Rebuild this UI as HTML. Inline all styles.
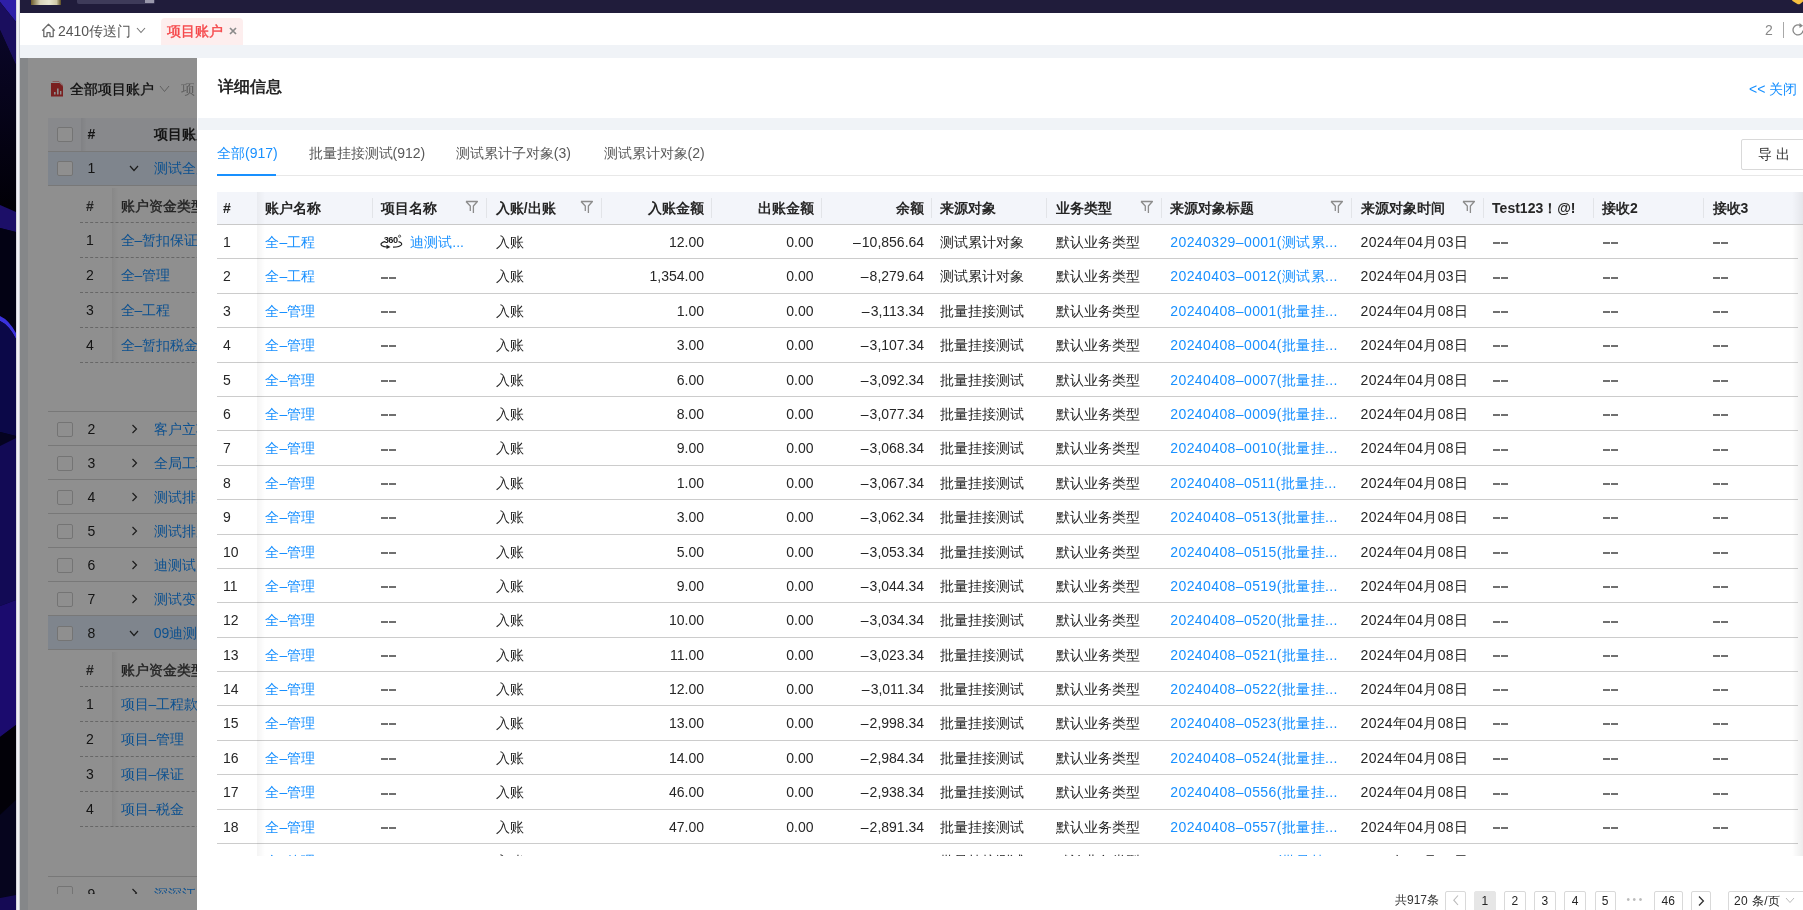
<!DOCTYPE html><html><head><meta charset="utf-8"><title>项目账户</title><style>
*{box-sizing:border-box;margin:0;padding:0}
html,body{width:1803px;height:910px;overflow:hidden;background:#fff}
body>div,body>svg{will-change:transform}
body{position:relative;font-family:"Liberation Sans",sans-serif;font-size:14px;color:#262626}
.a{position:absolute}
.nw{white-space:nowrap}
.link{color:#1890ff}
</style></head><body>
<svg class="a" style="left:0;top:0" width="16" height="910" viewBox="0 0 16 910">
<defs><linearGradient id="gd" x1="0" y1="0" x2="0" y2="1"><stop offset="0" stop-color="#0a0628"/><stop offset="1" stop-color="#010006"/></linearGradient></defs>
<rect width="16" height="910" fill="#040218"/>
<polygon points="0,0 16,0 16,22 0,2" fill="#2e1fa8"/>
<polygon points="0,2 16,22 16,65 0,30" fill="#1a0e5e"/>
<polygon points="0,30 16,65 16,212 0,205" fill="url(#gd)"/>
<polygon points="0,205 16,212 16,232 0,228" fill="#1c0f68"/>
<polygon points="0,228 16,232 16,333 0,316" fill="#030214"/>
<path d="M0 316 Q9 320 16 333 L16 339 Q9 325 0 321 Z" fill="#3b32dc"/>
<path d="M0 321 Q9 325 16 339 L16 436 L0 432 Z" fill="#0b0848"/>
<polygon points="0,432 16,436 16,438 0,446" fill="#050320"/>
<polygon points="0,446 16,438 16,600 0,606" fill="#120a55"/>
<polygon points="0,606 16,600 16,725 0,737" fill="#1b0b6e"/>
<polygon points="0,737 16,725 16,800 0,815" fill="#020108"/>
<polygon points="0,815 16,800 16,895 0,898" fill="#06051e"/>
<polygon points="0,898 16,895 16,910 0,910" fill="#150a55"/>
</svg>
<div class="a" style="left:16px;top:0;width:4px;height:910px;background:linear-gradient(90deg,#c8c9d0,#f4f4f8 40%,#eeeff3 70%,#b8b9be)"></div>
<div class="a" style="left:20px;top:0;width:1783px;height:12.6px;background:#201c3b"></div>
<div class="a" style="left:31px;top:0;width:30px;height:5px;background:linear-gradient(90deg,#6b5a2a,#d8d3b8 30%,#e8e6d0 60%,#cfc9a8 85%,#5a4a20)"></div>
<div class="a" style="left:77px;top:0;width:78px;height:3.7px;background:#3e3b5a;border-radius:0 0 2px 2px"></div>
<div class="a" style="left:145px;top:0;width:9px;height:2.5px;background:#9a98ac"></div>
<svg class="a" style="left:1792px;top:0" width="11" height="5" viewBox="0 0 11 5"><path d="M0 0 H11 V1.5 L8 4 Q6.5 4.8 5 3.8 L0.5 1 Z" fill="#f5c040"/></svg>
<div class="a" style="left:20px;top:12.6px;width:1783px;height:32.4px;background:#fff"></div>
<div class="a" style="left:20px;top:45px;width:1783px;height:13px;background:#f0f3f7"></div>
<svg class="a" style="left:41px;top:23px" width="15" height="15" viewBox="0 0 15 15"><path d="M1.2 7.6 L7.5 1.3 L13.8 7.6 M2.8 6.2 V13.6 H6 V9.6 H9 V13.6 H12.2 V6.2" fill="none" stroke="#6a6a6a" stroke-width="1.3" stroke-linejoin="round"/></svg>
<div class="a nw" style="left:58px;top:21px;line-height:20px;font-size:14px;color:#555">2410传送门</div>
<svg class="a" style="left:136px;top:27px" width="10" height="7" viewBox="0 0 10 7"><path d="M1 1 L5 5.5 L9 1" fill="none" stroke="#777" stroke-width="1.1"/></svg>
<div class="a" style="left:161px;top:18px;width:82px;height:27px;background:#fdeeee;border-radius:4px 4px 0 0"></div>
<div class="a nw" style="left:166.8px;top:20.8px;line-height:20px;font-size:14px;color:#f5484b;-webkit-text-stroke:0.4px #f5484b">项目账户</div>
<svg class="a" style="left:228.6px;top:27px" width="8" height="8" viewBox="0 0 8 8"><path d="M1 1 L7 7 M7 1 L1 7" stroke="#8a8a8a" stroke-width="1.7"/></svg>
<div class="a nw" style="left:1764.7px;top:19.8px;line-height:20px;font-size:14px;color:#888">2</div>
<div class="a" style="left:1783px;top:22px;width:1px;height:16px;background:#a8a8a8"></div>
<svg class="a" style="left:1792px;top:22px" width="14" height="15" viewBox="0 0 14 15"><path d="M11 8.5 A5 5 0 1 1 8.5 3.6" fill="none" stroke="#888" stroke-width="1.3"/><path d="M7.5 1 L11 3.8 L7.5 6 Z" fill="#888"/></svg>
<div class="a" style="left:20px;top:58px;width:177px;height:852px;overflow:hidden;background:#eef0f4">
<div class="a" style="left:8px;top:0;width:200px;height:852px;background:#fff"></div>
<svg class="a" style="left:30px;top:22.5px" width="14" height="16" viewBox="0 0 14 16"><path d="M2.5 0.5 H9 L12.5 4 V13" fill="none" stroke="#f08a8a" stroke-width="0.8"/><path d="M1 2 H9.5 L13 5.5 V15.5 H1 Z" fill="#d93a3a"/><rect x="4" y="11" width="1.6" height="2.5" fill="#fff"/><rect x="7" y="7.5" width="1.6" height="6" fill="#fff"/><rect x="10" y="10" width="1.4" height="3.5" fill="#fff"/></svg>
<div class="a nw" style="left:50px;top:20.5px;line-height:20px;color:#1a1a1a;-webkit-text-stroke:0.3px #1a1a1a">全部项目账户</div>
<svg class="a" style="left:139px;top:26.5px" width="11" height="8" viewBox="0 0 11 8"><path d="M1 1 L5.5 6.5 L10 1" fill="none" stroke="#aaa" stroke-width="1"/></svg>
<div class="a nw" style="left:160.5px;top:21px;line-height:20px;color:#aaa">项目</div>
<div class="a" style="left:28px;top:60px;width:160px;height:34px;background:#f3f5fa;border-bottom:1px solid #d6d6d6"></div>
<div class="a" style="left:61px;top:60px;width:6px;height:33px;background:linear-gradient(90deg,rgba(0,0,0,0.06),rgba(0,0,0,0))"></div>
<div class="a" style="left:37.2px;top:68.8px;width:15.5px;height:15.5px;border:1px solid #cfcfcf;border-radius:2px;background:#fff"></div>
<div class="a nw" style="left:67.5px;top:66px;line-height:20px;font-weight:bold">#</div>
<div class="a nw" style="left:134.3px;top:66px;line-height:20px;font-weight:bold">项目账户名称</div>
<div class="a" style="left:28px;top:94.30000000000001px;width:160px;height:33.8px;background:#e3eefb;border-bottom:1px solid #d6d6d6"></div>
<div class="a" style="left:37.2px;top:102.50000000000003px;width:15.5px;height:15.5px;border:1px solid #cfcfcf;border-radius:2px;background:#fff"></div>
<div class="a nw" style="left:67.5px;top:100.20000000000002px;line-height:20px">1</div>
<svg class="a" style="left:109px;top:107.20000000000002px" width="10" height="7" viewBox="0 0 10 7"><path d="M1 1 L5 5.5 L9 1" fill="none" stroke="#333" stroke-width="1.2"/></svg>
<div class="a nw link" style="left:133.8px;top:100.20000000000002px;line-height:20px">测试全局账户</div>
<div class="a nw" style="left:66px;top:138px;line-height:20px;font-weight:bold;color:#444">#</div>
<div class="a nw" style="left:100.6px;top:138px;line-height:20px;color:#3a3a3a;-webkit-text-stroke:0.35px #3a3a3a">账户资金类型</div>
<div class="a" style="left:92.3px;top:130px;width:6px;height:174.2px;background:linear-gradient(90deg,rgba(0,0,0,0.05),rgba(0,0,0,0))"></div>
<div class="a" style="left:60px;top:164.0px;width:140px;height:0;border-top:1px dashed #b8b8b8"></div>
<div class="a" style="left:60px;top:198.7px;width:140px;height:0;border-top:1px dashed #b8b8b8"></div>
<div class="a" style="left:60px;top:233.5px;width:140px;height:0;border-top:1px dashed #b8b8b8"></div>
<div class="a" style="left:60px;top:268.5px;width:140px;height:0;border-top:1px dashed #b8b8b8"></div>
<div class="a" style="left:60px;top:303.7px;width:140px;height:0;border-top:1px dashed #b8b8b8"></div>
<div class="a nw" style="left:66px;top:171.85px;line-height:20px">1</div>
<div class="a nw link" style="left:100.6px;top:171.85px;line-height:20px">全–暂扣保证金</div>
<div class="a nw" style="left:66px;top:206.60000000000002px;line-height:20px">2</div>
<div class="a nw link" style="left:100.6px;top:206.60000000000002px;line-height:20px">全–管理</div>
<div class="a nw" style="left:66px;top:241.5px;line-height:20px">3</div>
<div class="a nw link" style="left:100.6px;top:241.5px;line-height:20px">全–工程</div>
<div class="a nw" style="left:66px;top:276.6px;line-height:20px">4</div>
<div class="a nw link" style="left:100.6px;top:276.6px;line-height:20px">全–暂扣税金</div>
<div class="a" style="left:28px;top:353.4px;width:160px;height:1px;background:#d6d6d6"></div>
<div class="a" style="left:28px;top:354.4px;width:160px;height:33.700000000000045px;background:#fff;border-bottom:1px solid #d6d6d6"></div>
<div class="a" style="left:37.2px;top:363.55px;width:15.5px;height:15.5px;border:1px solid #cfcfcf;border-radius:2px;background:#fff"></div>
<div class="a nw" style="left:67.5px;top:361.25px;line-height:20px">2</div>
<svg class="a" style="left:111px;top:366.25px" width="7" height="10" viewBox="0 0 7 10"><path d="M1.5 1 L5.5 5 L1.5 9" fill="none" stroke="#333" stroke-width="1.2"/></svg>
<div class="a nw link" style="left:133.8px;top:361.25px;line-height:20px">客户立项账户</div>
<div class="a" style="left:28px;top:388.1px;width:160px;height:34.299999999999955px;background:#fff;border-bottom:1px solid #d6d6d6"></div>
<div class="a" style="left:37.2px;top:397.55px;width:15.5px;height:15.5px;border:1px solid #cfcfcf;border-radius:2px;background:#fff"></div>
<div class="a nw" style="left:67.5px;top:395.25px;line-height:20px">3</div>
<svg class="a" style="left:111px;top:400.25px" width="7" height="10" viewBox="0 0 7 10"><path d="M1.5 1 L5.5 5 L1.5 9" fill="none" stroke="#333" stroke-width="1.2"/></svg>
<div class="a nw link" style="left:133.8px;top:395.25px;line-height:20px">全局工程账户</div>
<div class="a" style="left:28px;top:422.4px;width:160px;height:34.0px;background:#fff;border-bottom:1px solid #d6d6d6"></div>
<div class="a" style="left:37.2px;top:431.7px;width:15.5px;height:15.5px;border:1px solid #cfcfcf;border-radius:2px;background:#fff"></div>
<div class="a nw" style="left:67.5px;top:429.4px;line-height:20px">4</div>
<svg class="a" style="left:111px;top:434.4px" width="7" height="10" viewBox="0 0 7 10"><path d="M1.5 1 L5.5 5 L1.5 9" fill="none" stroke="#333" stroke-width="1.2"/></svg>
<div class="a nw link" style="left:133.8px;top:429.4px;line-height:20px">测试排序账户</div>
<div class="a" style="left:28px;top:456.4px;width:160px;height:34.0px;background:#fff;border-bottom:1px solid #d6d6d6"></div>
<div class="a" style="left:37.2px;top:465.69999999999993px;width:15.5px;height:15.5px;border:1px solid #cfcfcf;border-radius:2px;background:#fff"></div>
<div class="a nw" style="left:67.5px;top:463.4px;line-height:20px">5</div>
<svg class="a" style="left:111px;top:468.4px" width="7" height="10" viewBox="0 0 7 10"><path d="M1.5 1 L5.5 5 L1.5 9" fill="none" stroke="#333" stroke-width="1.2"/></svg>
<div class="a nw link" style="left:133.8px;top:463.4px;line-height:20px">测试排序账户</div>
<div class="a" style="left:28px;top:490.4px;width:160px;height:34.0px;background:#fff;border-bottom:1px solid #d6d6d6"></div>
<div class="a" style="left:37.2px;top:499.69999999999993px;width:15.5px;height:15.5px;border:1px solid #cfcfcf;border-radius:2px;background:#fff"></div>
<div class="a nw" style="left:67.5px;top:497.4px;line-height:20px">6</div>
<svg class="a" style="left:111px;top:502.4px" width="7" height="10" viewBox="0 0 7 10"><path d="M1.5 1 L5.5 5 L1.5 9" fill="none" stroke="#333" stroke-width="1.2"/></svg>
<div class="a nw link" style="left:133.8px;top:497.4px;line-height:20px">迪测试账户</div>
<div class="a" style="left:28px;top:524.4px;width:160px;height:34.0px;background:#fff;border-bottom:1px solid #d6d6d6"></div>
<div class="a" style="left:37.2px;top:533.6999999999999px;width:15.5px;height:15.5px;border:1px solid #cfcfcf;border-radius:2px;background:#fff"></div>
<div class="a nw" style="left:67.5px;top:531.4px;line-height:20px">7</div>
<svg class="a" style="left:111px;top:536.4px" width="7" height="10" viewBox="0 0 7 10"><path d="M1.5 1 L5.5 5 L1.5 9" fill="none" stroke="#333" stroke-width="1.2"/></svg>
<div class="a nw link" style="left:133.8px;top:531.4px;line-height:20px">测试变更账户</div>
<div class="a" style="left:28px;top:558.4px;width:160px;height:33.700000000000045px;background:#e3eefb;border-bottom:1px solid #d6d6d6"></div>
<div class="a" style="left:37.2px;top:567.55px;width:15.5px;height:15.5px;border:1px solid #cfcfcf;border-radius:2px;background:#fff"></div>
<div class="a nw" style="left:67.5px;top:565.25px;line-height:20px">8</div>
<svg class="a" style="left:109px;top:572.25px" width="10" height="7" viewBox="0 0 10 7"><path d="M1 1 L5 5.5 L9 1" fill="none" stroke="#333" stroke-width="1.2"/></svg>
<div class="a nw link" style="left:133.8px;top:565.25px;line-height:20px">09迪测试账户</div>
<div class="a nw" style="left:66px;top:601.6px;line-height:20px;font-weight:bold;color:#444">#</div>
<div class="a nw" style="left:100.6px;top:601.6px;line-height:20px;color:#3a3a3a;-webkit-text-stroke:0.35px #3a3a3a">账户资金类型</div>
<div class="a" style="left:92.3px;top:593.6px;width:6px;height:175.19999999999993px;background:linear-gradient(90deg,rgba(0,0,0,0.05),rgba(0,0,0,0))"></div>
<div class="a" style="left:60px;top:628.0px;width:140px;height:0;border-top:1px dashed #b8b8b8"></div>
<div class="a" style="left:60px;top:662.5px;width:140px;height:0;border-top:1px dashed #b8b8b8"></div>
<div class="a" style="left:60px;top:697.7px;width:140px;height:0;border-top:1px dashed #b8b8b8"></div>
<div class="a" style="left:60px;top:732.7px;width:140px;height:0;border-top:1px dashed #b8b8b8"></div>
<div class="a" style="left:60px;top:768.3px;width:140px;height:0;border-top:1px dashed #b8b8b8"></div>
<div class="a nw" style="left:66px;top:635.75px;line-height:20px">1</div>
<div class="a nw link" style="left:100.6px;top:635.75px;line-height:20px">项目–工程款</div>
<div class="a nw" style="left:66px;top:670.6px;line-height:20px">2</div>
<div class="a nw link" style="left:100.6px;top:670.6px;line-height:20px">项目–管理</div>
<div class="a nw" style="left:66px;top:705.7px;line-height:20px">3</div>
<div class="a nw link" style="left:100.6px;top:705.7px;line-height:20px">项目–保证</div>
<div class="a nw" style="left:66px;top:741.0px;line-height:20px">4</div>
<div class="a nw link" style="left:100.6px;top:741.0px;line-height:20px">项目–税金</div>
<div class="a" style="left:28px;top:818.3px;width:160px;height:1px;background:#d6d6d6"></div>
<div class="a" style="left:0;top:818.3px;width:177px;height:18px;overflow:hidden">
<div class="a" style="left:37.2px;top:10px;width:15.5px;height:15.5px;border:1px solid #cfcfcf;border-radius:2px;background:#fff"></div>
<div class="a nw" style="left:67.5px;top:8px;line-height:20px">9</div>
<svg class="a" style="left:111px;top:12px" width="7" height="10" viewBox="0 0 7 10"><path d="M1.5 1 L5.5 5 L1.5 9" fill="none" stroke="#333" stroke-width="1.2"/></svg>
<div class="a nw link" style="left:133.8px;top:8px;line-height:20px">深深江账户</div>
</div>
<div class="a" style="left:0;top:0;width:177px;height:852px;background:rgba(0,0,0,0.44)"></div>
</div>
<div class="a" style="left:197px;top:58px;width:1606px;height:852px;background:#fff;overflow:hidden">
<div class="a nw" style="left:20.5px;top:17px;line-height:24px;font-size:16px;font-weight:bold;color:#262626">详细信息</div>
<div class="a nw link" style="left:1552px;top:21px;line-height:20px;font-size:14px">&lt;&lt; 关闭</div>
<div class="a" style="left:1px;top:60px;width:1606px;height:12px;background:#f0f3f7"></div>
<div class="a" style="left:20px;top:117px;width:1600px;height:1px;background:#e8e8e8"></div>
<div class="a nw" style="left:20px;top:85px;line-height:20px;color:#1890ff">全部(917)</div>
<div class="a nw" style="left:111.60000000000002px;top:85px;line-height:20px;color:#595959">批量挂接测试(912)</div>
<div class="a nw" style="left:258.8px;top:85px;line-height:20px;color:#595959">测试累计子对象(3)</div>
<div class="a nw" style="left:406.6px;top:85px;line-height:20px;color:#595959">测试累计对象(2)</div>
<div class="a" style="left:20px;top:116px;width:59px;height:2px;background:#1890ff"></div>
<div class="a" style="left:1544.3px;top:80.5px;width:80px;height:31px;border:1px solid #d9d9d9;border-radius:2px;background:#fff"></div>
<div class="a nw" style="left:1560.5px;top:86px;line-height:20px;color:#333;letter-spacing:4px">导出</div>
<div class="a" style="left:20px;top:134px;width:1600px;height:33px;background:#f3f5fa;border-bottom:1px solid #c9c9c9"></div>
<div class="a nw" style="left:26px;top:140px;line-height:20px;font-weight:bold">#</div>
<div class="a nw" style="left:68.39999999999998px;top:140px;line-height:20px;font-weight:bold">账户名称</div>
<div class="a nw" style="left:183.5px;top:140px;line-height:20px;font-weight:bold">项目名称</div>
<svg class="a" style="left:267.7px;top:142.3px" width="14" height="14" viewBox="0 0 14 14"><path d="M1 1.5 H12.4 L8.4 6 V13 M1 1.5 L5.3 6 V11"  fill="none" stroke="#8c8c8c" stroke-width="1.3" stroke-linejoin="round"/></svg>
<div class="a" style="left:175px;top:140px;width:1px;height:20px;background:#e2e4e8"></div>
<div class="a nw" style="left:298.7px;top:140px;line-height:20px;font-weight:bold">入账/出账</div>
<svg class="a" style="left:383.1px;top:142.3px" width="14" height="14" viewBox="0 0 14 14"><path d="M1 1.5 H12.4 L8.4 6 V13 M1 1.5 L5.3 6 V11"  fill="none" stroke="#8c8c8c" stroke-width="1.3" stroke-linejoin="round"/></svg>
<div class="a" style="left:289px;top:140px;width:1px;height:20px;background:#e2e4e8"></div>
<div class="a nw" style="right:1099.0px;top:140px;line-height:20px;font-weight:bold">入账金额</div>
<div class="a" style="left:404px;top:140px;width:1px;height:20px;background:#e2e4e8"></div>
<div class="a nw" style="right:989.5px;top:140px;line-height:20px;font-weight:bold">出账金额</div>
<div class="a" style="left:514px;top:140px;width:1px;height:20px;background:#e2e4e8"></div>
<div class="a nw" style="right:878.9px;top:140px;line-height:20px;font-weight:bold">余额</div>
<div class="a" style="left:624px;top:140px;width:1px;height:20px;background:#e2e4e8"></div>
<div class="a nw" style="left:743.2px;top:140px;line-height:20px;font-weight:bold">来源对象</div>
<div class="a" style="left:734px;top:140px;width:1px;height:20px;background:#e2e4e8"></div>
<div class="a nw" style="left:858.5999999999999px;top:140px;line-height:20px;font-weight:bold">业务类型</div>
<svg class="a" style="left:943.0px;top:142.3px" width="14" height="14" viewBox="0 0 14 14"><path d="M1 1.5 H12.4 L8.4 6 V13 M1 1.5 L5.3 6 V11"  fill="none" stroke="#8c8c8c" stroke-width="1.3" stroke-linejoin="round"/></svg>
<div class="a" style="left:849px;top:140px;width:1px;height:20px;background:#e2e4e8"></div>
<div class="a nw" style="left:973.3px;top:140px;line-height:20px;font-weight:bold">来源对象标题</div>
<svg class="a" style="left:1133.0px;top:142.3px" width="14" height="14" viewBox="0 0 14 14"><path d="M1 1.5 H12.4 L8.4 6 V13 M1 1.5 L5.3 6 V11"  fill="none" stroke="#8c8c8c" stroke-width="1.3" stroke-linejoin="round"/></svg>
<div class="a" style="left:964px;top:140px;width:1px;height:20px;background:#e2e4e8"></div>
<div class="a nw" style="left:1163.6px;top:140px;line-height:20px;font-weight:bold">来源对象时间</div>
<svg class="a" style="left:1265.1px;top:142.3px" width="14" height="14" viewBox="0 0 14 14"><path d="M1 1.5 H12.4 L8.4 6 V13 M1 1.5 L5.3 6 V11"  fill="none" stroke="#8c8c8c" stroke-width="1.3" stroke-linejoin="round"/></svg>
<div class="a" style="left:1154px;top:140px;width:1px;height:20px;background:#e2e4e8"></div>
<div class="a nw" style="left:1295.1px;top:140px;line-height:20px;font-weight:bold">Test123！@!</div>
<div class="a" style="left:1286px;top:140px;width:1px;height:20px;background:#e2e4e8"></div>
<div class="a nw" style="left:1405.1px;top:140px;line-height:20px;font-weight:bold">接收2</div>
<div class="a" style="left:1396px;top:140px;width:1px;height:20px;background:#e2e4e8"></div>
<div class="a nw" style="left:1515.6000000000001px;top:140px;line-height:20px;font-weight:bold">接收3</div>
<div class="a" style="left:1506px;top:140px;width:1px;height:20px;background:#e2e4e8"></div>
<div class="a" style="left:0px;top:167px;width:1606px;height:631px;overflow:hidden">
<div class="a" style="left:20px;top:33px;width:1581px;height:1px;background:#cccccc"></div>
<div class="a nw " style="left:26px;top:6.5px;line-height:20px;letter-spacing:0px">1</div>
<div class="a nw link" style="left:68.39999999999998px;top:6.5px;line-height:20px;letter-spacing:0px">全–工程</div>
<svg class="a" style="left:183px;top:9.0px" width="23" height="15" viewBox="0 0 23 15"><text x="10.6" y="8.7" text-anchor="middle" font-family="Liberation Sans" font-weight="bold" font-size="9.2" letter-spacing="-0.5" fill="#1a1a1a">360</text><circle cx="19.6" cy="2.2" r="1.1" fill="none" stroke="#1a1a1a" stroke-width="0.7"/><path d="M7 13 C2 12.5 0.5 11 1.2 9.6 C1.8 8.5 3 8 4.5 7.6 M18.5 7.6 C21 8.3 22 9.5 21.5 10.7 C20.7 12 17 13 13 13.2" fill="none" stroke="#222" stroke-width="1.2"/><path d="M6.5 10.8 L10.5 13 L6.5 15 Z" fill="#222"/></svg>
<div class="a nw link" style="left:213.3px;top:6.5px;line-height:20px">迪测试...</div>
<div class="a nw " style="left:298.7px;top:6.5px;line-height:20px;letter-spacing:0px">入账</div>
<div class="a nw " style="right:1099.0px;top:6.5px;line-height:20px">12.00</div>
<div class="a nw " style="right:989.5px;top:6.5px;line-height:20px">0.00</div>
<div class="a nw " style="right:878.9px;top:6.5px;line-height:20px"><span style="margin-right:1px">–</span>10,856.64</div>
<div class="a nw " style="left:743.2px;top:6.5px;line-height:20px;letter-spacing:0px">测试累计对象</div>
<div class="a nw " style="left:858.5999999999999px;top:6.5px;line-height:20px;letter-spacing:0px">默认业务类型</div>
<div class="a nw link" style="left:973.3px;top:6.5px;line-height:20px;letter-spacing:0.4px">20240329–0001(测试累...</div>
<div class="a nw " style="left:1163.6px;top:6.5px;line-height:20px;letter-spacing:0.3px">2024年04月03日</div>
<div class="a" style="left:1296px;top:17px;width:7px;height:2px;background:#707070"></div><div class="a" style="left:1304px;top:17px;width:7px;height:2px;background:#707070"></div>
<div class="a" style="left:1406px;top:17px;width:7px;height:2px;background:#707070"></div><div class="a" style="left:1414px;top:17px;width:7px;height:2px;background:#707070"></div>
<div class="a" style="left:1516px;top:17px;width:7px;height:2px;background:#707070"></div><div class="a" style="left:1524px;top:17px;width:7px;height:2px;background:#707070"></div>
<div class="a" style="left:20px;top:68px;width:1581px;height:1px;background:#cccccc"></div>
<div class="a nw " style="left:26px;top:41.0px;line-height:20px;letter-spacing:0px">2</div>
<div class="a nw link" style="left:68.39999999999998px;top:41.0px;line-height:20px;letter-spacing:0px">全–工程</div>
<div class="a" style="left:184px;top:52px;width:7px;height:2px;background:#707070"></div><div class="a" style="left:192px;top:52px;width:7px;height:2px;background:#707070"></div>
<div class="a nw " style="left:298.7px;top:41.0px;line-height:20px;letter-spacing:0px">入账</div>
<div class="a nw " style="right:1099.0px;top:41.0px;line-height:20px">1,354.00</div>
<div class="a nw " style="right:989.5px;top:41.0px;line-height:20px">0.00</div>
<div class="a nw " style="right:878.9px;top:41.0px;line-height:20px"><span style="margin-right:1px">–</span>8,279.64</div>
<div class="a nw " style="left:743.2px;top:41.0px;line-height:20px;letter-spacing:0px">测试累计对象</div>
<div class="a nw " style="left:858.5999999999999px;top:41.0px;line-height:20px;letter-spacing:0px">默认业务类型</div>
<div class="a nw link" style="left:973.3px;top:41.0px;line-height:20px;letter-spacing:0.4px">20240403–0012(测试累...</div>
<div class="a nw " style="left:1163.6px;top:41.0px;line-height:20px;letter-spacing:0.3px">2024年04月03日</div>
<div class="a" style="left:1296px;top:52px;width:7px;height:2px;background:#707070"></div><div class="a" style="left:1304px;top:52px;width:7px;height:2px;background:#707070"></div>
<div class="a" style="left:1406px;top:52px;width:7px;height:2px;background:#707070"></div><div class="a" style="left:1414px;top:52px;width:7px;height:2px;background:#707070"></div>
<div class="a" style="left:1516px;top:52px;width:7px;height:2px;background:#707070"></div><div class="a" style="left:1524px;top:52px;width:7px;height:2px;background:#707070"></div>
<div class="a" style="left:20px;top:102px;width:1581px;height:1px;background:#cccccc"></div>
<div class="a nw " style="left:26px;top:75.5px;line-height:20px;letter-spacing:0px">3</div>
<div class="a nw link" style="left:68.39999999999998px;top:75.5px;line-height:20px;letter-spacing:0px">全–管理</div>
<div class="a" style="left:184px;top:86px;width:7px;height:2px;background:#707070"></div><div class="a" style="left:192px;top:86px;width:7px;height:2px;background:#707070"></div>
<div class="a nw " style="left:298.7px;top:75.5px;line-height:20px;letter-spacing:0px">入账</div>
<div class="a nw " style="right:1099.0px;top:75.5px;line-height:20px">1.00</div>
<div class="a nw " style="right:989.5px;top:75.5px;line-height:20px">0.00</div>
<div class="a nw " style="right:878.9px;top:75.5px;line-height:20px"><span style="margin-right:1px">–</span>3,113.34</div>
<div class="a nw " style="left:743.2px;top:75.5px;line-height:20px;letter-spacing:0px">批量挂接测试</div>
<div class="a nw " style="left:858.5999999999999px;top:75.5px;line-height:20px;letter-spacing:0px">默认业务类型</div>
<div class="a nw link" style="left:973.3px;top:75.5px;line-height:20px;letter-spacing:0.4px">20240408–0001(批量挂...</div>
<div class="a nw " style="left:1163.6px;top:75.5px;line-height:20px;letter-spacing:0.3px">2024年04月08日</div>
<div class="a" style="left:1296px;top:86px;width:7px;height:2px;background:#707070"></div><div class="a" style="left:1304px;top:86px;width:7px;height:2px;background:#707070"></div>
<div class="a" style="left:1406px;top:86px;width:7px;height:2px;background:#707070"></div><div class="a" style="left:1414px;top:86px;width:7px;height:2px;background:#707070"></div>
<div class="a" style="left:1516px;top:86px;width:7px;height:2px;background:#707070"></div><div class="a" style="left:1524px;top:86px;width:7px;height:2px;background:#707070"></div>
<div class="a" style="left:20px;top:137px;width:1581px;height:1px;background:#cccccc"></div>
<div class="a nw " style="left:26px;top:110.0px;line-height:20px;letter-spacing:0px">4</div>
<div class="a nw link" style="left:68.39999999999998px;top:110.0px;line-height:20px;letter-spacing:0px">全–管理</div>
<div class="a" style="left:184px;top:120px;width:7px;height:2px;background:#707070"></div><div class="a" style="left:192px;top:120px;width:7px;height:2px;background:#707070"></div>
<div class="a nw " style="left:298.7px;top:110.0px;line-height:20px;letter-spacing:0px">入账</div>
<div class="a nw " style="right:1099.0px;top:110.0px;line-height:20px">3.00</div>
<div class="a nw " style="right:989.5px;top:110.0px;line-height:20px">0.00</div>
<div class="a nw " style="right:878.9px;top:110.0px;line-height:20px"><span style="margin-right:1px">–</span>3,107.34</div>
<div class="a nw " style="left:743.2px;top:110.0px;line-height:20px;letter-spacing:0px">批量挂接测试</div>
<div class="a nw " style="left:858.5999999999999px;top:110.0px;line-height:20px;letter-spacing:0px">默认业务类型</div>
<div class="a nw link" style="left:973.3px;top:110.0px;line-height:20px;letter-spacing:0.4px">20240408–0004(批量挂...</div>
<div class="a nw " style="left:1163.6px;top:110.0px;line-height:20px;letter-spacing:0.3px">2024年04月08日</div>
<div class="a" style="left:1296px;top:120px;width:7px;height:2px;background:#707070"></div><div class="a" style="left:1304px;top:120px;width:7px;height:2px;background:#707070"></div>
<div class="a" style="left:1406px;top:120px;width:7px;height:2px;background:#707070"></div><div class="a" style="left:1414px;top:120px;width:7px;height:2px;background:#707070"></div>
<div class="a" style="left:1516px;top:120px;width:7px;height:2px;background:#707070"></div><div class="a" style="left:1524px;top:120px;width:7px;height:2px;background:#707070"></div>
<div class="a" style="left:20px;top:171px;width:1581px;height:1px;background:#cccccc"></div>
<div class="a nw " style="left:26px;top:144.5px;line-height:20px;letter-spacing:0px">5</div>
<div class="a nw link" style="left:68.39999999999998px;top:144.5px;line-height:20px;letter-spacing:0px">全–管理</div>
<div class="a" style="left:184px;top:155px;width:7px;height:2px;background:#707070"></div><div class="a" style="left:192px;top:155px;width:7px;height:2px;background:#707070"></div>
<div class="a nw " style="left:298.7px;top:144.5px;line-height:20px;letter-spacing:0px">入账</div>
<div class="a nw " style="right:1099.0px;top:144.5px;line-height:20px">6.00</div>
<div class="a nw " style="right:989.5px;top:144.5px;line-height:20px">0.00</div>
<div class="a nw " style="right:878.9px;top:144.5px;line-height:20px"><span style="margin-right:1px">–</span>3,092.34</div>
<div class="a nw " style="left:743.2px;top:144.5px;line-height:20px;letter-spacing:0px">批量挂接测试</div>
<div class="a nw " style="left:858.5999999999999px;top:144.5px;line-height:20px;letter-spacing:0px">默认业务类型</div>
<div class="a nw link" style="left:973.3px;top:144.5px;line-height:20px;letter-spacing:0.4px">20240408–0007(批量挂...</div>
<div class="a nw " style="left:1163.6px;top:144.5px;line-height:20px;letter-spacing:0.3px">2024年04月08日</div>
<div class="a" style="left:1296px;top:155px;width:7px;height:2px;background:#707070"></div><div class="a" style="left:1304px;top:155px;width:7px;height:2px;background:#707070"></div>
<div class="a" style="left:1406px;top:155px;width:7px;height:2px;background:#707070"></div><div class="a" style="left:1414px;top:155px;width:7px;height:2px;background:#707070"></div>
<div class="a" style="left:1516px;top:155px;width:7px;height:2px;background:#707070"></div><div class="a" style="left:1524px;top:155px;width:7px;height:2px;background:#707070"></div>
<div class="a" style="left:20px;top:205px;width:1581px;height:1px;background:#cccccc"></div>
<div class="a nw " style="left:26px;top:178.5px;line-height:20px;letter-spacing:0px">6</div>
<div class="a nw link" style="left:68.39999999999998px;top:178.5px;line-height:20px;letter-spacing:0px">全–管理</div>
<div class="a" style="left:184px;top:189px;width:7px;height:2px;background:#707070"></div><div class="a" style="left:192px;top:189px;width:7px;height:2px;background:#707070"></div>
<div class="a nw " style="left:298.7px;top:178.5px;line-height:20px;letter-spacing:0px">入账</div>
<div class="a nw " style="right:1099.0px;top:178.5px;line-height:20px">8.00</div>
<div class="a nw " style="right:989.5px;top:178.5px;line-height:20px">0.00</div>
<div class="a nw " style="right:878.9px;top:178.5px;line-height:20px"><span style="margin-right:1px">–</span>3,077.34</div>
<div class="a nw " style="left:743.2px;top:178.5px;line-height:20px;letter-spacing:0px">批量挂接测试</div>
<div class="a nw " style="left:858.5999999999999px;top:178.5px;line-height:20px;letter-spacing:0px">默认业务类型</div>
<div class="a nw link" style="left:973.3px;top:178.5px;line-height:20px;letter-spacing:0.4px">20240408–0009(批量挂...</div>
<div class="a nw " style="left:1163.6px;top:178.5px;line-height:20px;letter-spacing:0.3px">2024年04月08日</div>
<div class="a" style="left:1296px;top:189px;width:7px;height:2px;background:#707070"></div><div class="a" style="left:1304px;top:189px;width:7px;height:2px;background:#707070"></div>
<div class="a" style="left:1406px;top:189px;width:7px;height:2px;background:#707070"></div><div class="a" style="left:1414px;top:189px;width:7px;height:2px;background:#707070"></div>
<div class="a" style="left:1516px;top:189px;width:7px;height:2px;background:#707070"></div><div class="a" style="left:1524px;top:189px;width:7px;height:2px;background:#707070"></div>
<div class="a" style="left:20px;top:240px;width:1581px;height:1px;background:#cccccc"></div>
<div class="a nw " style="left:26px;top:213.0px;line-height:20px;letter-spacing:0px">7</div>
<div class="a nw link" style="left:68.39999999999998px;top:213.0px;line-height:20px;letter-spacing:0px">全–管理</div>
<div class="a" style="left:184px;top:224px;width:7px;height:2px;background:#707070"></div><div class="a" style="left:192px;top:224px;width:7px;height:2px;background:#707070"></div>
<div class="a nw " style="left:298.7px;top:213.0px;line-height:20px;letter-spacing:0px">入账</div>
<div class="a nw " style="right:1099.0px;top:213.0px;line-height:20px">9.00</div>
<div class="a nw " style="right:989.5px;top:213.0px;line-height:20px">0.00</div>
<div class="a nw " style="right:878.9px;top:213.0px;line-height:20px"><span style="margin-right:1px">–</span>3,068.34</div>
<div class="a nw " style="left:743.2px;top:213.0px;line-height:20px;letter-spacing:0px">批量挂接测试</div>
<div class="a nw " style="left:858.5999999999999px;top:213.0px;line-height:20px;letter-spacing:0px">默认业务类型</div>
<div class="a nw link" style="left:973.3px;top:213.0px;line-height:20px;letter-spacing:0.4px">20240408–0010(批量挂...</div>
<div class="a nw " style="left:1163.6px;top:213.0px;line-height:20px;letter-spacing:0.3px">2024年04月08日</div>
<div class="a" style="left:1296px;top:224px;width:7px;height:2px;background:#707070"></div><div class="a" style="left:1304px;top:224px;width:7px;height:2px;background:#707070"></div>
<div class="a" style="left:1406px;top:224px;width:7px;height:2px;background:#707070"></div><div class="a" style="left:1414px;top:224px;width:7px;height:2px;background:#707070"></div>
<div class="a" style="left:1516px;top:224px;width:7px;height:2px;background:#707070"></div><div class="a" style="left:1524px;top:224px;width:7px;height:2px;background:#707070"></div>
<div class="a" style="left:20px;top:274px;width:1581px;height:1px;background:#cccccc"></div>
<div class="a nw " style="left:26px;top:247.5px;line-height:20px;letter-spacing:0px">8</div>
<div class="a nw link" style="left:68.39999999999998px;top:247.5px;line-height:20px;letter-spacing:0px">全–管理</div>
<div class="a" style="left:184px;top:258px;width:7px;height:2px;background:#707070"></div><div class="a" style="left:192px;top:258px;width:7px;height:2px;background:#707070"></div>
<div class="a nw " style="left:298.7px;top:247.5px;line-height:20px;letter-spacing:0px">入账</div>
<div class="a nw " style="right:1099.0px;top:247.5px;line-height:20px">1.00</div>
<div class="a nw " style="right:989.5px;top:247.5px;line-height:20px">0.00</div>
<div class="a nw " style="right:878.9px;top:247.5px;line-height:20px"><span style="margin-right:1px">–</span>3,067.34</div>
<div class="a nw " style="left:743.2px;top:247.5px;line-height:20px;letter-spacing:0px">批量挂接测试</div>
<div class="a nw " style="left:858.5999999999999px;top:247.5px;line-height:20px;letter-spacing:0px">默认业务类型</div>
<div class="a nw link" style="left:973.3px;top:247.5px;line-height:20px;letter-spacing:0.4px">20240408–0511(批量挂...</div>
<div class="a nw " style="left:1163.6px;top:247.5px;line-height:20px;letter-spacing:0.3px">2024年04月08日</div>
<div class="a" style="left:1296px;top:258px;width:7px;height:2px;background:#707070"></div><div class="a" style="left:1304px;top:258px;width:7px;height:2px;background:#707070"></div>
<div class="a" style="left:1406px;top:258px;width:7px;height:2px;background:#707070"></div><div class="a" style="left:1414px;top:258px;width:7px;height:2px;background:#707070"></div>
<div class="a" style="left:1516px;top:258px;width:7px;height:2px;background:#707070"></div><div class="a" style="left:1524px;top:258px;width:7px;height:2px;background:#707070"></div>
<div class="a" style="left:20px;top:309px;width:1581px;height:1px;background:#cccccc"></div>
<div class="a nw " style="left:26px;top:282.0px;line-height:20px;letter-spacing:0px">9</div>
<div class="a nw link" style="left:68.39999999999998px;top:282.0px;line-height:20px;letter-spacing:0px">全–管理</div>
<div class="a" style="left:184px;top:292px;width:7px;height:2px;background:#707070"></div><div class="a" style="left:192px;top:292px;width:7px;height:2px;background:#707070"></div>
<div class="a nw " style="left:298.7px;top:282.0px;line-height:20px;letter-spacing:0px">入账</div>
<div class="a nw " style="right:1099.0px;top:282.0px;line-height:20px">3.00</div>
<div class="a nw " style="right:989.5px;top:282.0px;line-height:20px">0.00</div>
<div class="a nw " style="right:878.9px;top:282.0px;line-height:20px"><span style="margin-right:1px">–</span>3,062.34</div>
<div class="a nw " style="left:743.2px;top:282.0px;line-height:20px;letter-spacing:0px">批量挂接测试</div>
<div class="a nw " style="left:858.5999999999999px;top:282.0px;line-height:20px;letter-spacing:0px">默认业务类型</div>
<div class="a nw link" style="left:973.3px;top:282.0px;line-height:20px;letter-spacing:0.4px">20240408–0513(批量挂...</div>
<div class="a nw " style="left:1163.6px;top:282.0px;line-height:20px;letter-spacing:0.3px">2024年04月08日</div>
<div class="a" style="left:1296px;top:292px;width:7px;height:2px;background:#707070"></div><div class="a" style="left:1304px;top:292px;width:7px;height:2px;background:#707070"></div>
<div class="a" style="left:1406px;top:292px;width:7px;height:2px;background:#707070"></div><div class="a" style="left:1414px;top:292px;width:7px;height:2px;background:#707070"></div>
<div class="a" style="left:1516px;top:292px;width:7px;height:2px;background:#707070"></div><div class="a" style="left:1524px;top:292px;width:7px;height:2px;background:#707070"></div>
<div class="a" style="left:20px;top:343px;width:1581px;height:1px;background:#cccccc"></div>
<div class="a nw " style="left:26px;top:316.5px;line-height:20px;letter-spacing:0px">10</div>
<div class="a nw link" style="left:68.39999999999998px;top:316.5px;line-height:20px;letter-spacing:0px">全–管理</div>
<div class="a" style="left:184px;top:327px;width:7px;height:2px;background:#707070"></div><div class="a" style="left:192px;top:327px;width:7px;height:2px;background:#707070"></div>
<div class="a nw " style="left:298.7px;top:316.5px;line-height:20px;letter-spacing:0px">入账</div>
<div class="a nw " style="right:1099.0px;top:316.5px;line-height:20px">5.00</div>
<div class="a nw " style="right:989.5px;top:316.5px;line-height:20px">0.00</div>
<div class="a nw " style="right:878.9px;top:316.5px;line-height:20px"><span style="margin-right:1px">–</span>3,053.34</div>
<div class="a nw " style="left:743.2px;top:316.5px;line-height:20px;letter-spacing:0px">批量挂接测试</div>
<div class="a nw " style="left:858.5999999999999px;top:316.5px;line-height:20px;letter-spacing:0px">默认业务类型</div>
<div class="a nw link" style="left:973.3px;top:316.5px;line-height:20px;letter-spacing:0.4px">20240408–0515(批量挂...</div>
<div class="a nw " style="left:1163.6px;top:316.5px;line-height:20px;letter-spacing:0.3px">2024年04月08日</div>
<div class="a" style="left:1296px;top:327px;width:7px;height:2px;background:#707070"></div><div class="a" style="left:1304px;top:327px;width:7px;height:2px;background:#707070"></div>
<div class="a" style="left:1406px;top:327px;width:7px;height:2px;background:#707070"></div><div class="a" style="left:1414px;top:327px;width:7px;height:2px;background:#707070"></div>
<div class="a" style="left:1516px;top:327px;width:7px;height:2px;background:#707070"></div><div class="a" style="left:1524px;top:327px;width:7px;height:2px;background:#707070"></div>
<div class="a" style="left:20px;top:377px;width:1581px;height:1px;background:#cccccc"></div>
<div class="a nw " style="left:26px;top:350.5px;line-height:20px;letter-spacing:0px">11</div>
<div class="a nw link" style="left:68.39999999999998px;top:350.5px;line-height:20px;letter-spacing:0px">全–管理</div>
<div class="a" style="left:184px;top:361px;width:7px;height:2px;background:#707070"></div><div class="a" style="left:192px;top:361px;width:7px;height:2px;background:#707070"></div>
<div class="a nw " style="left:298.7px;top:350.5px;line-height:20px;letter-spacing:0px">入账</div>
<div class="a nw " style="right:1099.0px;top:350.5px;line-height:20px">9.00</div>
<div class="a nw " style="right:989.5px;top:350.5px;line-height:20px">0.00</div>
<div class="a nw " style="right:878.9px;top:350.5px;line-height:20px"><span style="margin-right:1px">–</span>3,044.34</div>
<div class="a nw " style="left:743.2px;top:350.5px;line-height:20px;letter-spacing:0px">批量挂接测试</div>
<div class="a nw " style="left:858.5999999999999px;top:350.5px;line-height:20px;letter-spacing:0px">默认业务类型</div>
<div class="a nw link" style="left:973.3px;top:350.5px;line-height:20px;letter-spacing:0.4px">20240408–0519(批量挂...</div>
<div class="a nw " style="left:1163.6px;top:350.5px;line-height:20px;letter-spacing:0.3px">2024年04月08日</div>
<div class="a" style="left:1296px;top:361px;width:7px;height:2px;background:#707070"></div><div class="a" style="left:1304px;top:361px;width:7px;height:2px;background:#707070"></div>
<div class="a" style="left:1406px;top:361px;width:7px;height:2px;background:#707070"></div><div class="a" style="left:1414px;top:361px;width:7px;height:2px;background:#707070"></div>
<div class="a" style="left:1516px;top:361px;width:7px;height:2px;background:#707070"></div><div class="a" style="left:1524px;top:361px;width:7px;height:2px;background:#707070"></div>
<div class="a" style="left:20px;top:412px;width:1581px;height:1px;background:#cccccc"></div>
<div class="a nw " style="left:26px;top:385.0px;line-height:20px;letter-spacing:0px">12</div>
<div class="a nw link" style="left:68.39999999999998px;top:385.0px;line-height:20px;letter-spacing:0px">全–管理</div>
<div class="a" style="left:184px;top:396px;width:7px;height:2px;background:#707070"></div><div class="a" style="left:192px;top:396px;width:7px;height:2px;background:#707070"></div>
<div class="a nw " style="left:298.7px;top:385.0px;line-height:20px;letter-spacing:0px">入账</div>
<div class="a nw " style="right:1099.0px;top:385.0px;line-height:20px">10.00</div>
<div class="a nw " style="right:989.5px;top:385.0px;line-height:20px">0.00</div>
<div class="a nw " style="right:878.9px;top:385.0px;line-height:20px"><span style="margin-right:1px">–</span>3,034.34</div>
<div class="a nw " style="left:743.2px;top:385.0px;line-height:20px;letter-spacing:0px">批量挂接测试</div>
<div class="a nw " style="left:858.5999999999999px;top:385.0px;line-height:20px;letter-spacing:0px">默认业务类型</div>
<div class="a nw link" style="left:973.3px;top:385.0px;line-height:20px;letter-spacing:0.4px">20240408–0520(批量挂...</div>
<div class="a nw " style="left:1163.6px;top:385.0px;line-height:20px;letter-spacing:0.3px">2024年04月08日</div>
<div class="a" style="left:1296px;top:396px;width:7px;height:2px;background:#707070"></div><div class="a" style="left:1304px;top:396px;width:7px;height:2px;background:#707070"></div>
<div class="a" style="left:1406px;top:396px;width:7px;height:2px;background:#707070"></div><div class="a" style="left:1414px;top:396px;width:7px;height:2px;background:#707070"></div>
<div class="a" style="left:1516px;top:396px;width:7px;height:2px;background:#707070"></div><div class="a" style="left:1524px;top:396px;width:7px;height:2px;background:#707070"></div>
<div class="a" style="left:20px;top:446px;width:1581px;height:1px;background:#cccccc"></div>
<div class="a nw " style="left:26px;top:419.5px;line-height:20px;letter-spacing:0px">13</div>
<div class="a nw link" style="left:68.39999999999998px;top:419.5px;line-height:20px;letter-spacing:0px">全–管理</div>
<div class="a" style="left:184px;top:430px;width:7px;height:2px;background:#707070"></div><div class="a" style="left:192px;top:430px;width:7px;height:2px;background:#707070"></div>
<div class="a nw " style="left:298.7px;top:419.5px;line-height:20px;letter-spacing:0px">入账</div>
<div class="a nw " style="right:1099.0px;top:419.5px;line-height:20px">11.00</div>
<div class="a nw " style="right:989.5px;top:419.5px;line-height:20px">0.00</div>
<div class="a nw " style="right:878.9px;top:419.5px;line-height:20px"><span style="margin-right:1px">–</span>3,023.34</div>
<div class="a nw " style="left:743.2px;top:419.5px;line-height:20px;letter-spacing:0px">批量挂接测试</div>
<div class="a nw " style="left:858.5999999999999px;top:419.5px;line-height:20px;letter-spacing:0px">默认业务类型</div>
<div class="a nw link" style="left:973.3px;top:419.5px;line-height:20px;letter-spacing:0.4px">20240408–0521(批量挂...</div>
<div class="a nw " style="left:1163.6px;top:419.5px;line-height:20px;letter-spacing:0.3px">2024年04月08日</div>
<div class="a" style="left:1296px;top:430px;width:7px;height:2px;background:#707070"></div><div class="a" style="left:1304px;top:430px;width:7px;height:2px;background:#707070"></div>
<div class="a" style="left:1406px;top:430px;width:7px;height:2px;background:#707070"></div><div class="a" style="left:1414px;top:430px;width:7px;height:2px;background:#707070"></div>
<div class="a" style="left:1516px;top:430px;width:7px;height:2px;background:#707070"></div><div class="a" style="left:1524px;top:430px;width:7px;height:2px;background:#707070"></div>
<div class="a" style="left:20px;top:480px;width:1581px;height:1px;background:#cccccc"></div>
<div class="a nw " style="left:26px;top:453.5px;line-height:20px;letter-spacing:0px">14</div>
<div class="a nw link" style="left:68.39999999999998px;top:453.5px;line-height:20px;letter-spacing:0px">全–管理</div>
<div class="a" style="left:184px;top:464px;width:7px;height:2px;background:#707070"></div><div class="a" style="left:192px;top:464px;width:7px;height:2px;background:#707070"></div>
<div class="a nw " style="left:298.7px;top:453.5px;line-height:20px;letter-spacing:0px">入账</div>
<div class="a nw " style="right:1099.0px;top:453.5px;line-height:20px">12.00</div>
<div class="a nw " style="right:989.5px;top:453.5px;line-height:20px">0.00</div>
<div class="a nw " style="right:878.9px;top:453.5px;line-height:20px"><span style="margin-right:1px">–</span>3,011.34</div>
<div class="a nw " style="left:743.2px;top:453.5px;line-height:20px;letter-spacing:0px">批量挂接测试</div>
<div class="a nw " style="left:858.5999999999999px;top:453.5px;line-height:20px;letter-spacing:0px">默认业务类型</div>
<div class="a nw link" style="left:973.3px;top:453.5px;line-height:20px;letter-spacing:0.4px">20240408–0522(批量挂...</div>
<div class="a nw " style="left:1163.6px;top:453.5px;line-height:20px;letter-spacing:0.3px">2024年04月08日</div>
<div class="a" style="left:1296px;top:464px;width:7px;height:2px;background:#707070"></div><div class="a" style="left:1304px;top:464px;width:7px;height:2px;background:#707070"></div>
<div class="a" style="left:1406px;top:464px;width:7px;height:2px;background:#707070"></div><div class="a" style="left:1414px;top:464px;width:7px;height:2px;background:#707070"></div>
<div class="a" style="left:1516px;top:464px;width:7px;height:2px;background:#707070"></div><div class="a" style="left:1524px;top:464px;width:7px;height:2px;background:#707070"></div>
<div class="a" style="left:20px;top:515px;width:1581px;height:1px;background:#cccccc"></div>
<div class="a nw " style="left:26px;top:488.0px;line-height:20px;letter-spacing:0px">15</div>
<div class="a nw link" style="left:68.39999999999998px;top:488.0px;line-height:20px;letter-spacing:0px">全–管理</div>
<div class="a" style="left:184px;top:498px;width:7px;height:2px;background:#707070"></div><div class="a" style="left:192px;top:498px;width:7px;height:2px;background:#707070"></div>
<div class="a nw " style="left:298.7px;top:488.0px;line-height:20px;letter-spacing:0px">入账</div>
<div class="a nw " style="right:1099.0px;top:488.0px;line-height:20px">13.00</div>
<div class="a nw " style="right:989.5px;top:488.0px;line-height:20px">0.00</div>
<div class="a nw " style="right:878.9px;top:488.0px;line-height:20px"><span style="margin-right:1px">–</span>2,998.34</div>
<div class="a nw " style="left:743.2px;top:488.0px;line-height:20px;letter-spacing:0px">批量挂接测试</div>
<div class="a nw " style="left:858.5999999999999px;top:488.0px;line-height:20px;letter-spacing:0px">默认业务类型</div>
<div class="a nw link" style="left:973.3px;top:488.0px;line-height:20px;letter-spacing:0.4px">20240408–0523(批量挂...</div>
<div class="a nw " style="left:1163.6px;top:488.0px;line-height:20px;letter-spacing:0.3px">2024年04月08日</div>
<div class="a" style="left:1296px;top:498px;width:7px;height:2px;background:#707070"></div><div class="a" style="left:1304px;top:498px;width:7px;height:2px;background:#707070"></div>
<div class="a" style="left:1406px;top:498px;width:7px;height:2px;background:#707070"></div><div class="a" style="left:1414px;top:498px;width:7px;height:2px;background:#707070"></div>
<div class="a" style="left:1516px;top:498px;width:7px;height:2px;background:#707070"></div><div class="a" style="left:1524px;top:498px;width:7px;height:2px;background:#707070"></div>
<div class="a" style="left:20px;top:549px;width:1581px;height:1px;background:#cccccc"></div>
<div class="a nw " style="left:26px;top:522.5px;line-height:20px;letter-spacing:0px">16</div>
<div class="a nw link" style="left:68.39999999999998px;top:522.5px;line-height:20px;letter-spacing:0px">全–管理</div>
<div class="a" style="left:184px;top:533px;width:7px;height:2px;background:#707070"></div><div class="a" style="left:192px;top:533px;width:7px;height:2px;background:#707070"></div>
<div class="a nw " style="left:298.7px;top:522.5px;line-height:20px;letter-spacing:0px">入账</div>
<div class="a nw " style="right:1099.0px;top:522.5px;line-height:20px">14.00</div>
<div class="a nw " style="right:989.5px;top:522.5px;line-height:20px">0.00</div>
<div class="a nw " style="right:878.9px;top:522.5px;line-height:20px"><span style="margin-right:1px">–</span>2,984.34</div>
<div class="a nw " style="left:743.2px;top:522.5px;line-height:20px;letter-spacing:0px">批量挂接测试</div>
<div class="a nw " style="left:858.5999999999999px;top:522.5px;line-height:20px;letter-spacing:0px">默认业务类型</div>
<div class="a nw link" style="left:973.3px;top:522.5px;line-height:20px;letter-spacing:0.4px">20240408–0524(批量挂...</div>
<div class="a nw " style="left:1163.6px;top:522.5px;line-height:20px;letter-spacing:0.3px">2024年04月08日</div>
<div class="a" style="left:1296px;top:533px;width:7px;height:2px;background:#707070"></div><div class="a" style="left:1304px;top:533px;width:7px;height:2px;background:#707070"></div>
<div class="a" style="left:1406px;top:533px;width:7px;height:2px;background:#707070"></div><div class="a" style="left:1414px;top:533px;width:7px;height:2px;background:#707070"></div>
<div class="a" style="left:1516px;top:533px;width:7px;height:2px;background:#707070"></div><div class="a" style="left:1524px;top:533px;width:7px;height:2px;background:#707070"></div>
<div class="a" style="left:20px;top:584px;width:1581px;height:1px;background:#cccccc"></div>
<div class="a nw " style="left:26px;top:557.0px;line-height:20px;letter-spacing:0px">17</div>
<div class="a nw link" style="left:68.39999999999998px;top:557.0px;line-height:20px;letter-spacing:0px">全–管理</div>
<div class="a" style="left:184px;top:568px;width:7px;height:2px;background:#707070"></div><div class="a" style="left:192px;top:568px;width:7px;height:2px;background:#707070"></div>
<div class="a nw " style="left:298.7px;top:557.0px;line-height:20px;letter-spacing:0px">入账</div>
<div class="a nw " style="right:1099.0px;top:557.0px;line-height:20px">46.00</div>
<div class="a nw " style="right:989.5px;top:557.0px;line-height:20px">0.00</div>
<div class="a nw " style="right:878.9px;top:557.0px;line-height:20px"><span style="margin-right:1px">–</span>2,938.34</div>
<div class="a nw " style="left:743.2px;top:557.0px;line-height:20px;letter-spacing:0px">批量挂接测试</div>
<div class="a nw " style="left:858.5999999999999px;top:557.0px;line-height:20px;letter-spacing:0px">默认业务类型</div>
<div class="a nw link" style="left:973.3px;top:557.0px;line-height:20px;letter-spacing:0.4px">20240408–0556(批量挂...</div>
<div class="a nw " style="left:1163.6px;top:557.0px;line-height:20px;letter-spacing:0.3px">2024年04月08日</div>
<div class="a" style="left:1296px;top:568px;width:7px;height:2px;background:#707070"></div><div class="a" style="left:1304px;top:568px;width:7px;height:2px;background:#707070"></div>
<div class="a" style="left:1406px;top:568px;width:7px;height:2px;background:#707070"></div><div class="a" style="left:1414px;top:568px;width:7px;height:2px;background:#707070"></div>
<div class="a" style="left:1516px;top:568px;width:7px;height:2px;background:#707070"></div><div class="a" style="left:1524px;top:568px;width:7px;height:2px;background:#707070"></div>
<div class="a" style="left:20px;top:618px;width:1581px;height:1px;background:#cccccc"></div>
<div class="a nw " style="left:26px;top:591.5px;line-height:20px;letter-spacing:0px">18</div>
<div class="a nw link" style="left:68.39999999999998px;top:591.5px;line-height:20px;letter-spacing:0px">全–管理</div>
<div class="a" style="left:184px;top:602px;width:7px;height:2px;background:#707070"></div><div class="a" style="left:192px;top:602px;width:7px;height:2px;background:#707070"></div>
<div class="a nw " style="left:298.7px;top:591.5px;line-height:20px;letter-spacing:0px">入账</div>
<div class="a nw " style="right:1099.0px;top:591.5px;line-height:20px">47.00</div>
<div class="a nw " style="right:989.5px;top:591.5px;line-height:20px">0.00</div>
<div class="a nw " style="right:878.9px;top:591.5px;line-height:20px"><span style="margin-right:1px">–</span>2,891.34</div>
<div class="a nw " style="left:743.2px;top:591.5px;line-height:20px;letter-spacing:0px">批量挂接测试</div>
<div class="a nw " style="left:858.5999999999999px;top:591.5px;line-height:20px;letter-spacing:0px">默认业务类型</div>
<div class="a nw link" style="left:973.3px;top:591.5px;line-height:20px;letter-spacing:0.4px">20240408–0557(批量挂...</div>
<div class="a nw " style="left:1163.6px;top:591.5px;line-height:20px;letter-spacing:0.3px">2024年04月08日</div>
<div class="a" style="left:1296px;top:602px;width:7px;height:2px;background:#707070"></div><div class="a" style="left:1304px;top:602px;width:7px;height:2px;background:#707070"></div>
<div class="a" style="left:1406px;top:602px;width:7px;height:2px;background:#707070"></div><div class="a" style="left:1414px;top:602px;width:7px;height:2px;background:#707070"></div>
<div class="a" style="left:1516px;top:602px;width:7px;height:2px;background:#707070"></div><div class="a" style="left:1524px;top:602px;width:7px;height:2px;background:#707070"></div>
<div class="a" style="left:20px;top:652px;width:1581px;height:1px;background:#cccccc"></div>
<div class="a nw " style="left:26px;top:625.5px;line-height:20px;letter-spacing:0px">19</div>
<div class="a nw link" style="left:68.39999999999998px;top:625.5px;line-height:20px;letter-spacing:0px">全–管理</div>
<div class="a" style="left:184px;top:636px;width:7px;height:2px;background:#707070"></div><div class="a" style="left:192px;top:636px;width:7px;height:2px;background:#707070"></div>
<div class="a nw " style="left:298.7px;top:625.5px;line-height:20px;letter-spacing:0px">入账</div>
<div class="a nw " style="right:1099.0px;top:625.5px;line-height:20px">48.00</div>
<div class="a nw " style="right:989.5px;top:625.5px;line-height:20px">0.00</div>
<div class="a nw " style="right:878.9px;top:625.5px;line-height:20px"><span style="margin-right:1px">–</span>2,843.34</div>
<div class="a nw " style="left:743.2px;top:625.5px;line-height:20px;letter-spacing:0px">批量挂接测试</div>
<div class="a nw " style="left:858.5999999999999px;top:625.5px;line-height:20px;letter-spacing:0px">默认业务类型</div>
<div class="a nw link" style="left:973.3px;top:625.5px;line-height:20px;letter-spacing:0.4px">20240408–0558(批量挂...</div>
<div class="a nw " style="left:1163.6px;top:625.5px;line-height:20px;letter-spacing:0.3px">2024年04月08日</div>
<div class="a" style="left:1296px;top:636px;width:7px;height:2px;background:#707070"></div><div class="a" style="left:1304px;top:636px;width:7px;height:2px;background:#707070"></div>
<div class="a" style="left:1406px;top:636px;width:7px;height:2px;background:#707070"></div><div class="a" style="left:1414px;top:636px;width:7px;height:2px;background:#707070"></div>
<div class="a" style="left:1516px;top:636px;width:7px;height:2px;background:#707070"></div><div class="a" style="left:1524px;top:636px;width:7px;height:2px;background:#707070"></div>
<div class="a" style="left:60px;top:0;width:8px;height:700px;background:linear-gradient(90deg,rgba(0,0,0,0.045),rgba(0,0,0,0))"></div>
<div class="a" style="left:1595px;top:0;width:11px;height:700px;background:linear-gradient(90deg,rgba(0,0,0,0),rgba(0,0,0,0.07))"></div>
</div>
<div class="a" style="left:60px;top:134px;width:8px;height:32px;background:linear-gradient(90deg,rgba(0,0,0,0.04),rgba(0,0,0,0))"></div>
<div class="a" style="left:1595px;top:134px;width:11px;height:32px;background:linear-gradient(90deg,rgba(0,0,0,0),rgba(0,0,0,0.06))"></div>
<div class="a nw" style="left:1198px;top:832px;line-height:20px;font-size:12px;color:#333">共917条</div>
<div class="a" style="left:1248.3px;top:833px;width:20.5px;height:24px;background:#fff;border:1px solid #d9d9d9;border-radius:2px;text-align:center;line-height:19px;font-size:12px;color:#262626"><svg width="8" height="12" viewBox="0 0 8 12" style="vertical-align:-1px"><path d="M6 1.5 L1.8 6.2 L6 11" fill="none" stroke="#bbb" stroke-width="1.1"/></svg></div>
<div class="a" style="left:1277.1px;top:833px;width:21.7px;height:24px;background:#e6e6e6;border:1px solid #e6e6e6;border-radius:2px;text-align:center;line-height:19px;font-size:12px;color:#262626">1</div>
<div class="a" style="left:1307.1px;top:833px;width:21.7px;height:24px;background:#fff;border:1px solid #d9d9d9;border-radius:2px;text-align:center;line-height:19px;font-size:12px;color:#262626">2</div>
<div class="a" style="left:1337.2px;top:833px;width:21.5px;height:24px;background:#fff;border:1px solid #d9d9d9;border-radius:2px;text-align:center;line-height:19px;font-size:12px;color:#262626">3</div>
<div class="a" style="left:1367.4px;top:833px;width:21.4px;height:24px;background:#fff;border:1px solid #d9d9d9;border-radius:2px;text-align:center;line-height:19px;font-size:12px;color:#262626">4</div>
<div class="a" style="left:1397.6px;top:833px;width:21px;height:24px;background:#fff;border:1px solid #d9d9d9;border-radius:2px;text-align:center;line-height:19px;font-size:12px;color:#262626">5</div>
<div class="a nw" style="left:1429.5px;top:832.4px;font-size:10px;line-height:20px;color:#bbb;letter-spacing:2.6px">•••</div>
<div class="a" style="left:1456.5px;top:833px;width:29.3px;height:24px;background:#fff;border:1px solid #d9d9d9;border-radius:2px;text-align:center;line-height:19px;font-size:12px;color:#262626">46</div>
<div class="a" style="left:1494.4px;top:833px;width:20.1px;height:24px;background:#fff;border:1px solid #d9d9d9;border-radius:2px;text-align:center;line-height:19px;font-size:12px;color:#262626"><svg width="8" height="12" viewBox="0 0 8 12" style="vertical-align:-1px"><path d="M2 2.5 L6.4 7 L2 11.5" fill="none" stroke="#333" stroke-width="1.3"/></svg></div>
<div class="a" style="left:1531.3px;top:833px;width:90px;height:24px;background:#fff;border:1px solid #d9d9d9;border-radius:2px"></div>
<div class="a nw" style="left:1537px;top:833px;line-height:20px;font-size:12px;color:#262626;letter-spacing:0.4px">20 条/页</div>
<svg class="a" style="left:1588px;top:839px" width="10" height="7" viewBox="0 0 10 7"><path d="M1 1 L5 5.5 L9 1" fill="none" stroke="#bbb" stroke-width="1"/></svg>
</div>
</body></html>
